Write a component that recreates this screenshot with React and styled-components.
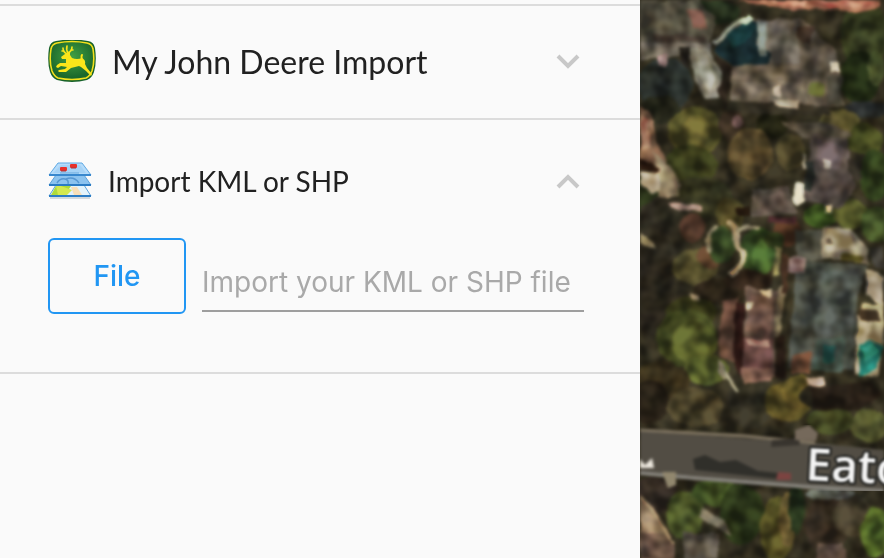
import { useState } from "react";
import styled, { createGlobalStyle } from "styled-components";

const GlobalStyle = createGlobalStyle`
  * {
    box-sizing: border-box;
  }

  body {
    margin: 0;
    background: #fafafa;
  }
`;

const Page = styled.div`
  display: grid;
  grid-template-columns: minmax(0, 640px) minmax(244px, 1fr);
  min-height: 100vh;
`;

const Sidebar = styled.aside`
  padding-top: 4px;
  background: #fafafa;
  color: #212121;
`;

const Sections = styled.div`
  border-top: 2px solid #dcdcdc;
`;

const Section = styled.section`
  padding: ${({ $open }) => ($open ? "40px 56px 58px 48px" : "32px 56px 32px 48px")};
  border-bottom: 2px solid #dcdcdc;
`;

const Heading = styled.h2`
  margin: 0;
  font: inherit;
`;

const Toggle = styled.button`
  display: flex;
  align-items: center;
  gap: 16px;
  width: 100%;
  height: ${({ $small }) => ($small ? "42px" : "48px")};
  padding: 0;
  border: 0;
  background: none;
  color: inherit;
  font-family: Lato, sans-serif;
  font-size: ${({ $small }) => ($small ? "28px" : "32px")};
  line-height: 40px;
  text-align: left;
  cursor: pointer;
`;

const Title = styled.span`
  flex: 1;
`;

const Chevron = styled.svg`
  width: 32px;
  height: 32px;
  fill: none;
  stroke: #c8c8c8;
  stroke-width: 4;
`;

const FileRow = styled.form`
  display: flex;
  align-items: flex-start;
  gap: 16px;
  margin-top: 36px;
`;

const FileButton = styled.button`
  flex: 0 0 138px;
  height: 76px;
  padding: 0;
  border: 2px solid #2196f3;
  border-radius: 6px;
  background: transparent;
  color: #2196f3;
  font-family: Inter, sans-serif;
  font-size: 28px;
  font-weight: 500;
  cursor: pointer;
`;

const FileInput = styled.input`
  flex: 1;
  min-width: 0;
  height: 60px;
  margin-top: 14px;
  padding: 2px 0 0;
  border: 0;
  border-bottom: 2px solid #9e9e9e;
  outline: 0;
  background: transparent;
  color: #212121;
  font-family: Inter, sans-serif;
  font-size: 28px;

  &::placeholder {
    color: #a9a9a9;
    opacity: 1;
  }
`;

const Map = styled.main`
  display: grid;
  overflow: hidden;
  background: #2f2b20;
`;

const MapImage = styled.svg`
  width: 100%;
  height: 100%;
  min-height: 0;
`;

const Foliage = styled.rect`
  mix-blend-mode: overlay;
`;

const StreetLabel = styled.text`
  fill: #f4f4f4;
  stroke: #2b2b28;
  stroke-width: 5px;
  stroke-linejoin: round;
  paint-order: stroke;
  font-family: "Open Sans", sans-serif;
  font-size: 46px;
  font-weight: 600;
`;

const DeereIcon = () => (
  <svg width="48" height="44" viewBox="0 0 48 44" aria-hidden="true">
    <defs>
      <radialGradient id="deere" cx=".5" cy=".4" r=".55">
        <stop offset="0" stopColor="#43a044" />
        <stop offset="1" stopColor="#1b682b" />
      </radialGradient>
    </defs>
    <path d="M8 1Q24-2 40 1Q46 2 47 8Q49 22 46 32Q44 38 39 40Q24 44 9 40Q4 38 2 32Q-1 22 1 8Q2 2 8 1Z" fill="#17622a" />
    <path d="M9 3Q24 0 39 3Q44 4 45 9Q47 22 44 31Q42 36 38 38Q24 41 10 38Q6 36 4 31Q1 22 3 9Q4 4 9 3Z" fill="url(#deere)" stroke="#f3e01c" strokeWidth="1.6" />
    <g fill="none" stroke="#fbe51a" strokeLinecap="round" strokeLinejoin="round">
      <path d="M19 14Q15 12 15 8M20 13Q18 10 19 6M20 13Q24 11 24 7M16 11L14 11M23 10L25 10" strokeWidth="1.6" />
      <path d="M34 20Q33 16 34 15" strokeWidth="2" />
    </g>
    <path d="M13 17L17 14L22 12L22 15L24 18Q29 20 34 18Q38 20 37 24L39 28L44 34L43 36L38 31L33 27L31 26Q27 27 23 28L18 32L11 32L10 31L11 30L17 29L19 27L13 26L10 28L8 27L9 25L12 23L18 23L18 19L14 19Z" fill="#fbe51a" />
  </svg>
);

const LayersIcon = () => (
  <svg width="44" height="38" viewBox="0 0 44 38" aria-hidden="true">
    <path d="M2 36H42" stroke="#d3dade" strokeWidth="2" />
    <path d="M8 23H36L43 34H1Z" fill="#e3f3fb" stroke="#5ba3dc" />
    <path d="M8 24H23L17 33H3Z" fill="#aedb3a" />
    <path d="M8 24H13L24 28L19 33H10Z" fill="#d4e94e" />
    <path d="M23 25H29L34 33H26Z" fill="#f8dfb8" />
    <path d="M1 34H43" stroke="#2b7cc4" strokeWidth="2" />
    <path d="M8 13H36L43 23H1Z" fill="#8cc3ef" stroke="#5ba3dc" />
    <path d="M9 21Q12 16 17 17Q21 18 20 22M18 17Q26 14 31 21" fill="none" stroke="#5798d3" strokeWidth="1.500" />
    <path d="M1 23H43" stroke="#2b7cc4" strokeWidth="2" />
    <path d="M10 1H34L43 13H1Z" fill="#b6dcfa" stroke="#5fa9e4" />
    <path d="M13 3H32L38 11H5Z" fill="#a5d2f6" />
    <path d="M12 11H31" stroke="#68a9dd" />
    <path d="M1 13H43" stroke="#3988ce" strokeWidth="2" />
    <rect x="12" y="5" width="7" height="4" rx="1" fill="#e8302a" />
    <rect x="22" y="2" width="7" height="4" rx="1" fill="#e8302a" />
    <path d="M13 9H18M23 6H28" stroke="#a9343a" />
  </svg>
);

const ToggleChevron = ({ open }) => (
  <Chevron viewBox="0 0 32 32" aria-hidden="true">
    <polyline points={open ? "6,22 16,12 26,22" : "6,10 16,20 26,10"} />
  </Chevron>
);

// trees, lawns and shadows: [cx, cy, rx, ry, fill]
const patches = [
  [75, 12, 26, 12, "#26301e"],
  [225, 35, 24, 36, "#343a20"],
  [220, 78, 20, 26, "#202914"],
  [236, 68, 9, 18, "#3e4728"],
  [225, 110, 22, 9, "#292c2b"],
  [25, 85, 28, 26, "#272c29"],
  [20, 110, 22, 14, "#24251a"],
  [55, 132, 27, 25, "#4b4824"],
  [56, 130, 14, 15, "#5d572b"],
  [50, 166, 28, 20, "#35381b"],
  [92, 125, 13, 17, "#362b20"],
  [98, 122, 5, 6, "#6f5553"],
  [132, 125, 16, 13, "#202012"],
  [110, 154, 23, 26, "#51442a"],
  [150, 152, 15, 18, "#484128"],
  [200, 122, 21, 12, "#5b542f"],
  [225, 140, 18, 16, "#40441f"],
  [235, 175, 15, 26, "#2e3b1c"],
  [6, 198, 22, 21, "#283019"],
  [58, 198, 36, 21, "#343420"],
  [26, 225, 29, 30, "#2d2a20"],
  [12, 280, 22, 56, "#2a261d"],
  [90, 214, 14, 17, "#494324"],
  [52, 228, 13, 15, "#4b3429"],
  [55, 267, 23, 18, "#4d4729"],
  [70, 257, 13, 11, "#523a28"],
  [82, 245, 13, 19, "#344424"],
  [118, 251, 19, 24, "#334722"],
  [123, 256, 11, 17, "#405a2a"],
  [80, 292, 28, 13, "#282117"],
  [108, 281, 24, 10, "#2c2118"],
  [51, 314, 25, 18, "#343519"],
  [47, 338, 31, 29, "#3d421f"],
  [54, 342, 23, 22, "#4e5427"],
  [66, 370, 22, 15, "#535b2a"],
  [20, 382, 29, 20, "#3b321e"],
  [10, 402, 20, 22, "#251f16"],
  [55, 407, 28, 20, "#443d28"],
  [110, 398, 22, 31, "#302d22"],
  [147, 402, 22, 21, "#514822"],
  [160, 392, 18, 17, "#625527"],
  [187, 396, 27, 14, "#29261c"],
  [190, 420, 23, 15, "#3d4222"],
  [230, 426, 20, 17, "#4f512c"],
  [180, 216, 17, 11, "#3c5322"],
  [211, 214, 18, 15, "#4b4e26"],
  [237, 225, 16, 18, "#3c4a25"],
  [147, 232, 14, 14, "#4a3020"],
  [134, 240, 10, 8, "#303b1d"],
  [15, 495, 24, 18, "#322a24"],
  [45, 515, 19, 25, "#465027"],
  [75, 492, 23, 14, "#3c4b22"],
  [101, 514, 22, 31, "#293319"],
  [137, 530, 17, 34, "#4f4b23"],
  [147, 519, 8, 28, "#625430"],
  [157, 509, 8, 26, "#25311c"],
  [187, 526, 22, 29, "#342b21"],
  [213, 516, 20, 21, "#40392a"],
  [236, 532, 16, 25, "#4d6127"],
  [190, 493, 25, 7, "#5a5e58"],
];

// roofs, yards, pools and paths: [points, fill]
const shapes = [
  ["0,0 58,0 76,18 70,45 0,46", "#504c40"],
  ["12,34 65,36 66,42 14,41", "#453a31"],
  ["47,8 64,10 67,29 52,28", "#67483f"],
  ["0,42 72,44 72,54 0,60", "#686157"],
  ["92,22 160,18 196,50 204,107 90,105", "#564d41"],
  ["118,20 158,20 160,63 127,63", "#615b52"],
  ["90,68 160,65 169,105 90,102", "#605547"],
  ["91,82 164,82 168,104 91,99", "#6f6557"],
  ["87,35 106,21 119,23 117,47 130,52 128,64 92,66 75,51", "#17272b"],
  ["86,35 108,21 116,28 108,37 92,50", "#18373a"],
  ["118,22 128,22 126,56 118,56", "#6c7471"],
  ["73,43 95,20 110,17 111,22 98,24 77,46", "#9ba092"],
  ["98,20 109,15 114,20 106,25", "#b3c5a5"],
  ["49,48 68,48 82,72 80,98 65,99 54,80", "#817f73"],
  ["56,55 69,56 76,80 70,92 60,78", "#969487"],
  ["41,48 50,48 49,70 41,63", "#23201c"],
  ["17,57 27,53 26,66 18,66", "#8c7170"],
  ["76,54 86,62 91,74 85,112 79,90 83,76", "#29221b"],
  ["96,0 240,0 240,7 216,12 178,8 153,10 122,4", "#9d6550"],
  ["128,0 168,0 166,7 140,5", "#c98973"],
  ["180,0 232,0 234,5 190,7", "#b97762"],
  ["90,101 189,106 191,115 120,115 84,110", "#302c22"],
  ["133,98 159,101 158,109 134,106", "#9b8d79"],
  ["134,87 142,86 142,95 135,95", "#b9a58e"],
  ["189,63 199,62 199,72 190,72", "#d0c6ae"],
  ["188,76 202,76 201,106 187,106", "#46433a"],
  ["170,82 184,84 185,97 169,94", "#4f532a"],
  ["156,28 174,27 170,44 158,39", "#3e3026"],
  ["0,105 11,114 17,141 26,162 16,180 0,158", "#80614b"],
  ["0,115 8,120 11,147 0,150", "#a57c62"],
  ["12,151 30,167 42,184 40,196 20,198", "#897960"],
  ["0,158 20,169 17,174 0,170", "#28180f"],
  ["0,173 18,174 21,190 14,194 0,183", "#b5a58c"],
  ["28,202 61,205 61,211 31,208", "#8d7569"],
  ["0,233 12,241 16,249 0,243", "#766b50"],
  ["140,121 188,122 212,134 203,142 164,139", "#4d463a"],
  ["173,135 207,139 216,188 200,209 160,200", "#504743"],
  ["177,140 205,147 199,171 180,169", "#5b4f50"],
  ["166,162 175,160 171,193 164,190", "#292d2a"],
  ["162,154 166,155 166,168 162,168", "#a39a84"],
  ["184,158 191,160 190,170 184,168", "#a59b90"],
  ["208,159 220,162 221,178 212,183", "#302b24"],
  ["112,189 148,187 156,214 111,217", "#544b42"],
  ["120,195 143,192 151,212 116,213", "#5e524b"],
  ["157,183 164,184 165,200 156,205 152,197", "#e0d6bc"],
  ["184,205 192,205 192,212 185,213", "#d8c4a2"],
  ["96,208 110,208 110,216 98,216", "#21160d"],
  ["129,216 156,218 156,225 128,223", "#452728"],
  ["156,231 182,228 183,261 157,263", "#49483d"],
  ["183,226 211,228 228,250 229,264 181,258", "#877d67"],
  ["187,229 208,231 217,249 187,252", "#a2967b"],
  ["187,240 192,238 194,244 188,246", "#4e4638"],
  ["204,255 224,256 222,263 202,261", "#5b5324"],
  ["230,249 244,247 244,270 235,268", "#36342f"],
  ["156,262 228,265 218,295 213,371 148,368", "#43463f"],
  ["174,271 219,270 213,327 175,342", "#494e49"],
  ["176,340 205,335 202,372 173,370", "#3e4a43"],
  ["183,345 196,345 194,361 183,363", "#275a52"],
  ["226,269 244,276 244,308 226,294", "#a49780"],
  ["222,303 244,305 240,377 215,374", "#9a8d6b"],
  ["217,315 232,320 226,345 237,364 215,374", "#b1a486"],
  ["219,309 237,310 239,323 219,319", "#392e21"],
  ["219,345 231,340 243,347 237,369 220,376", "#217164"],
  ["222,348 234,343 239,352 225,361", "#38978a"],
  ["106,287 138,292 134,378 103,373", "#5e4c42"],
  ["110,294 135,295 130,338 106,331", "#6b5146"],
  ["102,337 134,339 132,374 103,374", "#5d403e"],
  ["107,339 130,340 130,347 108,346", "#a47f72"],
  ["82,301 98,298 102,365 78,357", "#5c4236"],
  ["95,301 105,302 102,376 94,366", "#2a1714"],
  ["120,289 132,289 130,297 121,294", "#d0bc98"],
  ["106,301 114,302 112,309 106,309", "#bbad8d"],
  ["139,288 147,286 140,337 134,337", "#807056"],
  ["148,259 157,255 166,258 165,272 148,272", "#8f7670"],
  ["135,246 141,247 140,275 133,276", "#7f794e"],
  ["142,254 149,257 147,295 142,294", "#422e21"],
  ["139,335 147,336 144,379 134,377", "#281d17"],
  ["152,355 171,351 170,373 150,373", "#60402f"],
  ["50,291 59,294 60,300 51,299", "#81715a"],
  ["78,359 84,365 87,377 84,380 79,373", "#938970"],
  ["101,367 134,368 130,382 104,383", "#77584c"],
  ["166,377 185,378 185,386 168,385", "#b19a85"],
  ["171,388 231,381 240,395 220,411 171,409", "#282018"],
];

const MapPicture = () => (
  <MapImage viewBox="0 0 244 558" preserveAspectRatio="xMinYMin slice" role="img" aria-label="Satellite map">
    <defs>
      <filter id="ground" x="0" y="0" width="1" height="1" colorInterpolationFilters="sRGB">
        <feTurbulence type="fractalNoise" baseFrequency=".06" numOctaves="2" seed="6" result="warp" />
        <feDisplacementMap in="SourceGraphic" in2="warp" scale="6" xChannelSelector="R" yChannelSelector="G" />
        <feGaussianBlur stdDeviation="1.6" />
      </filter>
      <filter id="road" x="0" y="0" width="1" height="1" colorInterpolationFilters="sRGB">
        <feGaussianBlur stdDeviation="1.5" />
      </filter>
      <filter id="label" colorInterpolationFilters="sRGB">
        <feGaussianBlur stdDeviation=".8" />
      </filter>
      <filter id="foliage" x="0" y="0" width="1" height="1" colorInterpolationFilters="sRGB">
        <feTurbulence type="fractalNoise" baseFrequency=".061" numOctaves="2" seed="31" />
        <feColorMatrix values="2.4 .3 0 0 -.85 2.4 .1 0 0 -.76 2.4 0 .3 0 -.9 0 0 0 0 1" />
        <feGaussianBlur stdDeviation="1.5" />
      </filter>
    </defs>
    <g filter="url(#ground)">
      <rect x="-10" y="-10" width="264" height="578" fill="#302c1f" />
      {patches.map(([cx, cy, rx, ry, fill], i) => (
        <ellipse key={i} cx={cx} cy={cy} rx={rx} ry={ry} fill={fill} />
      ))}
      {shapes.map(([points, fill], i) => (
        <polygon key={i} points={points} fill={fill} />
      ))}
      <g fill="none" strokeLinecap="round" strokeLinejoin="round">
        <path d="M90 222Q98 225 96 237Q94 248 103 251Q106 264 92 273" stroke="#ac9979" strokeWidth="6" />
        <path d="M98 230Q107 222 119 228M69 250Q66 235 75 227" stroke="#90866a" strokeWidth="4" />
        <path d="M82 369L97 391" stroke="#969078" strokeWidth="3" />
      </g>
      <polygon points="0,495 10,504 32,537 34,558 0,558" fill="#897259" />
      <polygon points="0,532 28,534 35,547 35,568 0,568" fill="#665143" />
      <polyline points="2,498 15,514 34,545" fill="none" stroke="#ae9470" strokeWidth="2" />
      <polygon points="44,532 78,535 79,568 43,568" fill="#565047" />
      <polygon points="61,507 87,522 91,535 76,528 60,518" fill="#6c6656" />
      <polygon points="178,543 202,543 211,568 174,568" fill="#59483e" />
    </g>
    <Foliage width="244" height="558" filter="url(#foliage)" opacity=".4" />
    <g filter="url(#road)">
      <polygon points="0,431 130,440 175,443 244,450 244,490 165,485 0,471" fill="#524d44" />
      <path d="M0 430L105 436L175 443" fill="none" stroke="#807562" strokeWidth="3" />
      <path d="M0 473L55 478L170 487L244 491" fill="none" stroke="#85827b" strokeWidth="4" />
      <polygon points="53,459 65,455 80,462 96,460 118,471 148,474 147,480 55,470" fill="#302f2a" />
      <polygon points="138,472 151,473 151,480 136,480" fill="#7c4441" />
      <polygon points="132,440 159,438 160,445 131,447" fill="#38342e" />
      <polygon points="155,430 169,425 178,433 176,441 155,440" fill="#75695b" />
      <polygon points="22,472 36,472 36,485 28,488" fill="#91876e" />
      <path d="M0 459L5 465L12 458L14 468H0Z" fill="#eee9df" />
    </g>
    <StreetLabel x="165" y="480" transform="rotate(3 165 480)" filter="url(#label)">Eaton</StreetLabel>
  </MapImage>
);

const ImportSection = ({ icon, title, small, children }) => {
  const [open, setOpen] = useState(Boolean(children));

  return (
    <Section $open={open && children}>
      <Heading>
        <Toggle type="button" $small={small} aria-expanded={open} onClick={() => setOpen(!open)}>
          {icon}
          <Title>{title}</Title>
          <ToggleChevron open={open} />
        </Toggle>
      </Heading>
      {open && children}
    </Section>
  );
};

const App = () => (
  <>
    <GlobalStyle />
    <Page>
      <Sidebar>
        <Sections>
          <ImportSection icon={<DeereIcon />} title="My John Deere Import" />
          <ImportSection icon={<LayersIcon />} title="Import KML or SHP" small>
            <FileRow>
              <FileButton type="button">File</FileButton>
              <FileInput
                type="text"
                aria-label="Import your KML or SHP file"
                placeholder="Import your KML or SHP file"
              />
            </FileRow>
          </ImportSection>
        </Sections>
      </Sidebar>
      <Map>
        <MapPicture />
      </Map>
    </Page>
  </>
);

export default App;
